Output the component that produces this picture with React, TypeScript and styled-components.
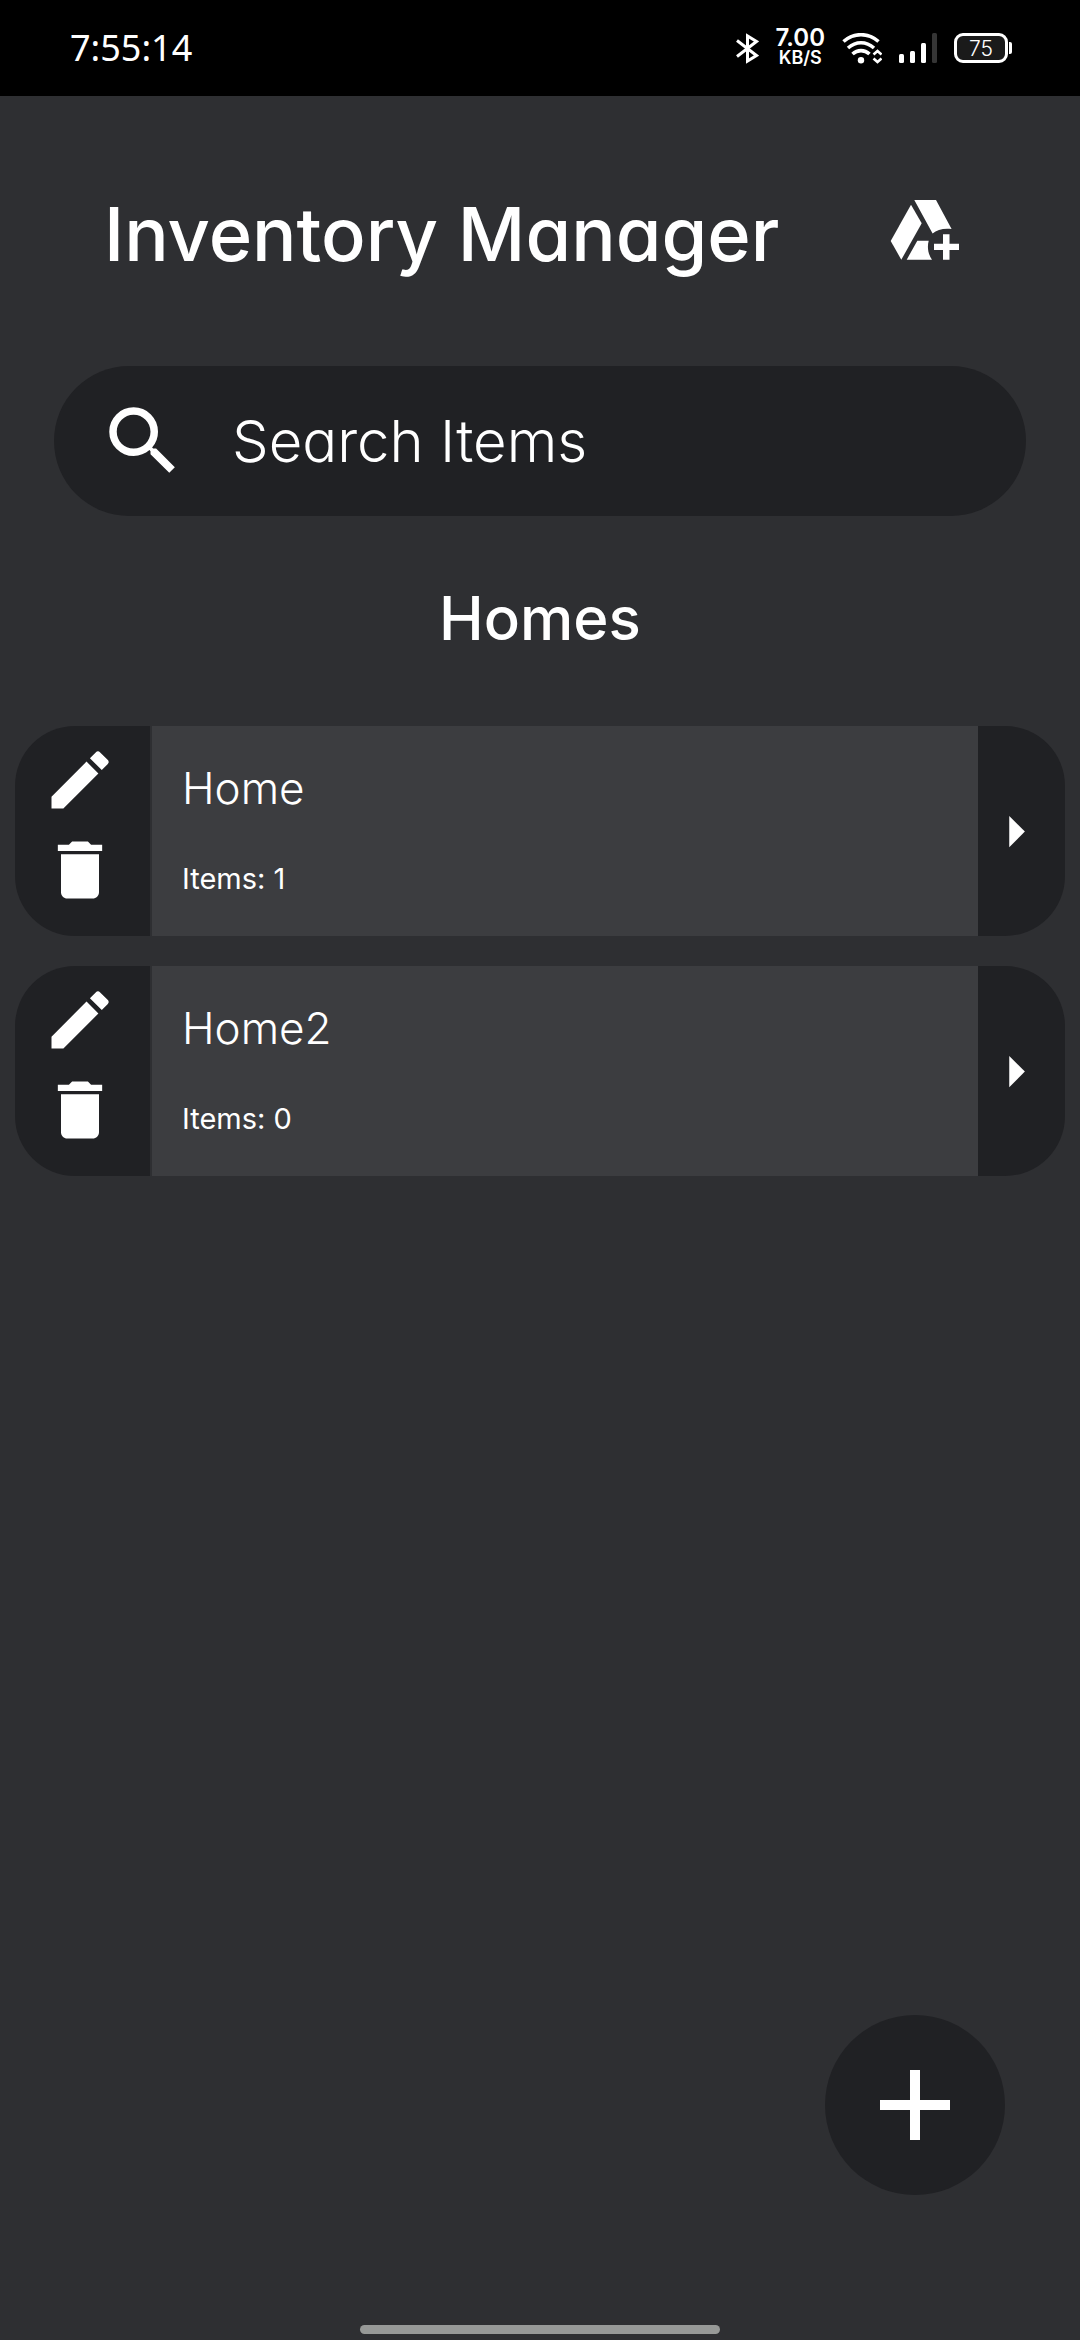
import React from "react";
import styled, { createGlobalStyle } from "styled-components";

const color = {
  page: "#2e2f32",
  panel: "#202124",
  card: "#3c3d40",
  text: "#ffffff",
};

const GlobalStyle = createGlobalStyle`
  *, *::before, *::after { box-sizing: border-box; }
  body {
    margin: 0;
    background: ${color.page};
    color: ${color.text};
    font-family: Inter, Roboto, sans-serif;
    font-feature-settings: "cv11";
  }
  button { padding: 0; border: 0; background: none; color: inherit; font: inherit; cursor: pointer; }
`;

const Screen = styled.div`
  display: flex;
  flex-direction: column;
  min-height: 100vh;
  background: ${color.page};
`;

const StatusBar = styled.div`
  display: flex;
  align-items: center;
  justify-content: space-between;
  height: 96px;
  padding: 0 68px 0 70px;
  background: #000;
`;

const Clock = styled.time`
  font-family: "Noto Sans", sans-serif;
  font-size: 36px;
  line-height: 48px;
`;

const StatusIcons = styled.div`
  display: flex;
  align-items: center;
  gap: 17px;
`;

const Speed = styled.div`
  display: flex;
  flex-direction: column;
  align-items: center;
  font-weight: 600;
`;

const SpeedLine = styled.span<{ $size: number }>`
  font-size: ${(p) => p.$size}px;
  line-height: 20px;
`;

const Battery = styled.div`
  display: flex;
  align-items: center;
  gap: 1px;
  &::after {
    content: "";
    width: 3px;
    height: 12px;
    border-radius: 0 2px 2px 0;
    background: #fff;
  }
`;

const BatteryBody = styled.span`
  display: flex;
  align-items: center;
  justify-content: center;
  width: 54px;
  height: 30px;
  border: 3px solid #fff;
  border-radius: 9px;
  background: #1a1a1a;
  font-size: 21px;
  font-weight: 300;
`;

const Header = styled.header`
  display: flex;
  align-items: center;
  justify-content: space-between;
  padding: 82px 120px 84px 104px;
`;

const Title = styled.h1`
  margin: 0;
  padding-top: 8px;
  font-size: 74px;
  font-weight: 500;
  line-height: 96px;
`;

const IconButton = styled.button`
  display: flex;
  align-items: center;
  justify-content: center;
`;

const SearchBox = styled.label`
  display: flex;
  align-items: center;
  gap: 44px;
  height: 150px;
  margin: 0 54px;
  padding: 0 44px;
  border-radius: 75px;
  background: ${color.panel};
`;

const SearchInput = styled.input`
  flex: 1;
  min-width: 0;
  padding: 0;
  border: 0;
  outline: 0;
  background: transparent;
  color: inherit;
  font: inherit;
  font-feature-settings: inherit;
  font-size: 58px;
  font-weight: 300;
  line-height: 76px;
  &::placeholder { color: inherit; opacity: 1; }
`;

const SectionTitle = styled.h2`
  margin: 64px 0 70px;
  font-size: 60px;
  font-weight: 500;
  line-height: 76px;
  text-align: center;
`;

const HomeList = styled.ul`
  display: flex;
  flex-direction: column;
  gap: 30px;
  margin: 0 15px;
  padding: 0;
  list-style: none;
`;

const HomeCard = styled.li`
  display: flex;
  height: 210px;
  border-radius: 60px;
  overflow: hidden;
`;

const Actions = styled.div`
  display: flex;
  flex-direction: column;
  gap: 14px;
  width: 135px;
  padding: 16px 32px 0 27px;
  background: ${color.panel};
`;

const Details = styled.div`
  flex: 1;
  display: flex;
  flex-direction: column;
  gap: 43px;
  margin-left: 2px;
  padding: 34px 30px 0;
  background: ${color.card};
`;

const HomeName = styled.h3`
  margin: 0;
  font-size: 44px;
  font-weight: 300;
  line-height: 56px;
`;

const ItemCount = styled.p`
  margin: 0;
  font-size: 29px;
  font-weight: 400;
  line-height: 40px;
`;

const OpenButton = styled(IconButton)`
  justify-content: flex-start;
  width: 87px;
  background: ${color.panel};
`;

const AddButton = styled(IconButton)`
  align-self: flex-end;
  width: 180px;
  height: 180px;
  margin: auto 75px 130px;
  border-radius: 50%;
  background: ${color.panel};
`;

const GestureBar = styled.div`
  align-self: center;
  width: 33.333%;
  height: 9px;
  margin-bottom: 6px;
  border-radius: 5px;
  background: #979997;
`;

const Glyph = ({ d, size }: { d: string; size: number }) => (
  <svg width={size} height={size} viewBox="0 0 24 24" fill="currentColor" aria-hidden="true">
    <path d={d} />
  </svg>
);

const paths = {
  search:
    "M15.5 14h-.79l-.28-.27A6.471 6.471 0 0 0 16 9.5 6.5 6.5 0 1 0 9.5 16c1.61 0 3.09-.59 4.23-1.57l.27.28v.79l5 4.99L20.49 19l-4.99-5zm-6 0C7.01 14 5 11.99 5 9.5S7.01 5 9.5 5 14 7.01 14 9.5 11.99 14 9.5 14z",
  edit:
    "M3 17.25V21h3.75L17.81 9.94l-3.75-3.75L3 17.25zM20.71 7.04a.996.996 0 0 0 0-1.41l-2.34-2.34a.996.996 0 0 0-1.41 0l-1.83 1.83 3.75 3.75 1.83-1.83z",
  trash: "M6 19c0 1.1.9 2 2 2h8c1.1 0 2-.9 2-2V7H6v12zM19 4h-3.5l-1-1h-5l-1 1H5v2h14V4z",
  arrow: "M10 17l5-5-5-5v10z",
  add: "M19 13h-6v6h-2v-6H5v-2h6V5h2v6h6v2z",
};

const BluetoothIcon = () => (
  <svg width="23" height="31" viewBox="0 0 23 31" fill="none" stroke="#fff" strokeWidth="3" aria-hidden="true">
    <path d="M1 7.5 20.5 22.500 11.500 28V3L20.500 8.500 1 23.500" />
  </svg>
);

const WifiIcon = () => (
  <svg width="40" height="31" viewBox="0 0 40 31" fill="none" stroke="#fff" aria-hidden="true">
    <g strokeWidth="3.600">
      <path d="M1.500 8.500C12-.6 26-.6 36.500 8.500" />
      <path d="M6 15c8-7 18-7 26 0" />
      <path d="M10.500 21c5-4.500 12-4.500 17 0" />
    </g>
    <circle cx="19" cy="27.300" r="3.200" fill="#fff" stroke="none" />
    <path d="M31.500 21.500 35.500 18l4 3.500M31.500 25.500l4 3.500 4-3.500" strokeWidth="2.600" />
  </svg>
);

const SignalIcon = () => (
  <svg width="38" height="30" viewBox="0 0 38 30" fill="#fff" aria-hidden="true">
    <rect x="0" y="21" width="5" height="9" rx="1.500" />
    <rect x="11" y="18" width="5" height="12" rx="1.500" />
    <rect x="22" y="10" width="5" height="20" rx="1.500" />
    <rect x="33" y="0" width="5" height="30" rx="1.500" fill="#353535" />
  </svg>
);

const DriveAddIcon = () => (
  <svg width="70" height="60" viewBox="0 0 70 60" fill="currentColor" aria-hidden="true">
    <path d="M24.300 0H46L61.600 29C54 28 47 29.500 42.600 33.600Z" />
    <path d="M21 4.700 31.700 23.300 11.300 59.700.7 41Z" />
    <path d="M27.300 40.700H38.700C37 47 38 54 42 59.700H16.700Z" />
    <path d="M53 34.300h6.500v9.500H69v6.200h-9.500v9.700H53V50h-9v-6.200h9Z" />
  </svg>
);

const homes = [
  { name: "Home", items: 1 },
  { name: "Home2", items: 0 },
];

export default function App() {
  return (
    <>
      <GlobalStyle />
      <Screen>
        <StatusBar>
          <Clock>7:55:14</Clock>
          <StatusIcons>
            <BluetoothIcon />
            <Speed>
              <SpeedLine $size={24}>7.00</SpeedLine>
              <SpeedLine $size={18}>KB/S</SpeedLine>
            </Speed>
            <WifiIcon />
            <SignalIcon />
            <Battery>
              <BatteryBody>75</BatteryBody>
            </Battery>
          </StatusIcons>
        </StatusBar>
        <Header>
          <Title>Inventory Manager</Title>
          <IconButton aria-label="Add to Drive">
            <DriveAddIcon />
          </IconButton>
        </Header>
        <SearchBox>
          <Glyph d={paths.search} size={90} />
          <SearchInput type="text" placeholder="Search Items" aria-label="Search Items" />
        </SearchBox>
        <SectionTitle>Homes</SectionTitle>
        <HomeList>
          {homes.map((home) => (
            <HomeCard key={home.name}>
              <Actions>
                <IconButton aria-label={`Edit ${home.name}`}>
                  <Glyph d={paths.edit} size={76} />
                </IconButton>
                <IconButton aria-label={`Delete ${home.name}`}>
                  <Glyph d={paths.trash} size={76} />
                </IconButton>
              </Actions>
              <Details>
                <HomeName>{home.name}</HomeName>
                <ItemCount>Items: {home.items}</ItemCount>
              </Details>
              <OpenButton aria-label={`Open ${home.name}`}>
                <Glyph d={paths.arrow} size={75} />
              </OpenButton>
            </HomeCard>
          ))}
        </HomeList>
        <AddButton aria-label="Add home">
          <Glyph d={paths.add} size={120} />
        </AddButton>
        <GestureBar />
      </Screen>
    </>
  );
}
